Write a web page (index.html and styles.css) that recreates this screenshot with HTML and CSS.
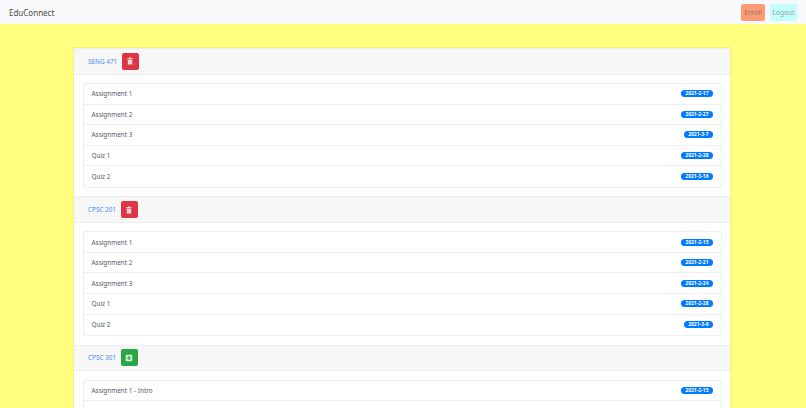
FILE: index.html
```html
<!DOCTYPE html>
<html lang="en">
<head>
    <meta charset="UTF-8">
    <title>EduConnect</title>
    <link rel="stylesheet" href="styles.css">
</head>
<body>
    <nav class="navbar">
        <span class="brand">EduConnect</span>
        <div class="nav-buttons">
            <button class="btn-enroll">Enroll</button>
            <button class="btn-logout">Logout</button>
        </div>
    </nav>

    <div class="card">
        <div class="card-header">
            <a class="course-link">SENG 471</a>
            <button class="icon-btn danger">
                <svg viewBox="0 0 16 16"><path d="M2.5 2.5h3.5V1h4v1.5h3.5v2h-11z"/><path d="M3.5 5.5h9V15h-9z"/></svg>
            </button>
        </div>
        <div class="card-body">
            <ul class="list-group">
                <li class="list-item"><span>Assignment 1</span><span class="badge">2021-2-17</span></li>
                <li class="list-item"><span>Assignment 2</span><span class="badge">2021-2-27</span></li>
                <li class="list-item"><span>Assignment 3</span><span class="badge">2021-3-7</span></li>
                <li class="list-item"><span>Quiz 1</span><span class="badge">2021-2-28</span></li>
                <li class="list-item"><span>Quiz 2</span><span class="badge">2021-3-16</span></li>
            </ul>
        </div>

        <div class="card-header">
            <a class="course-link">CPSC 201</a>
            <button class="icon-btn danger">
                <svg viewBox="0 0 16 16"><path d="M2.5 2.5h3.5V1h4v1.5h3.5v2h-11z"/><path d="M3.5 5.5h9V15h-9z"/></svg>
            </button>
        </div>
        <div class="card-body">
            <ul class="list-group">
                <li class="list-item"><span>Assignment 1</span><span class="badge">2021-2-15</span></li>
                <li class="list-item"><span>Assignment 2</span><span class="badge">2021-2-21</span></li>
                <li class="list-item"><span>Assignment 3</span><span class="badge">2021-2-24</span></li>
                <li class="list-item"><span>Quiz 1</span><span class="badge">2021-2-28</span></li>
                <li class="list-item"><span>Quiz 2</span><span class="badge">2021-3-6</span></li>
            </ul>
        </div>

        <div class="card-header">
            <a class="course-link">CPSC 301</a>
            <button class="icon-btn success">
                <svg viewBox="0 0 16 16"><path fill-rule="evenodd" d="M1.5 1.5h13v13h-13zM6.8 4v2.8H4v2.4h2.8V12h2.4V9.2H12V6.8H9.2V4z"/></svg>
            </button>
        </div>
        <div class="card-body">
            <ul class="list-group">
                <li class="list-item"><span>Assignment 1 - Intro</span><span class="badge">2021-2-15</span></li>
                <li class="list-item"><span>Assignment 2</span><span class="badge">2021-2-21</span></li>
            </ul>
        </div>
    </div>
</body>
</html>
```

FILE: styles.css
```css
html, body {
    height: 408px;
    overflow: hidden;
}

body {
    margin: 0;
    background: #ffff80;
    font-family: "Noto Sans", "Open Sans", sans-serif;
    font-size: 6.4px;
    color: #555b61;
}

.navbar {
    display: flex;
    justify-content: space-between;
    align-items: center;
    height: 24px;
    padding: 0 9px;
    background: #f8f9fa;
}

.brand {
    font-size: 8px;
    color: #4a4a4a;
}

.nav-buttons {
    display: flex;
    gap: 5px;
}

.nav-buttons button {
    height: 17px;
    padding: 0;
    border: none;
    border-radius: 2px;
    font-family: inherit;
    font-size: 6.6px;
}

.btn-enroll {
    width: 24px;
    background: #ff9a76;
    color: #8f7468;
}

.btn-logout {
    width: 27px;
    background: #c4fdfb;
    color: #8fa5a8;
}

.card {
    width: 656px;
    margin: 24px 0 0 74px;
    background: white;
    box-shadow: 0 0 0 1px rgba(0,0,0,0.05);
}

.card-header {
    display: flex;
    align-items: center;
    gap: 4.5px;
    height: 26.5px;
    padding: 0 14px;
    background: #f7f7f7;
    border-top: 1px solid #eeeeee;
    border-bottom: 1px solid #eeeeee;
    box-sizing: border-box;
}

.course-link {
    color: #3d8bf0;
    font-size: 6.4px;
}

.icon-btn {
    display: flex;
    align-items: center;
    justify-content: center;
    width: 17px;
    height: 17px;
    padding: 0;
    border: none;
    border-radius: 2px;
}

.icon-btn svg {
    width: 8px;
    height: 8px;
    fill: white;
    opacity: 0.8;
}

.danger {
    background: #dc3545;
}

.success {
    background: #28a745;
}

.card-body {
    padding: 8.5px 8.5px 8.3px;
}

.list-group {
    list-style: none;
    margin: 0;
    padding: 0;
    border: 1px solid #eeeeee;
    border-radius: 2px;
}

.list-item {
    display: flex;
    justify-content: space-between;
    align-items: center;
    height: 20.6px;
    padding: 0 8px;
    box-sizing: border-box;
    border-bottom: 1px solid #eeeeee;
}

.list-item:last-child {
    border-bottom: none;
}

.badge {
    padding: 0 4px;
    height: 7px;
    line-height: 7px;
    border-radius: 4px;
    background: #007bff;
    color: white;
    font-size: 5px;
    font-weight: bold;
}
```
